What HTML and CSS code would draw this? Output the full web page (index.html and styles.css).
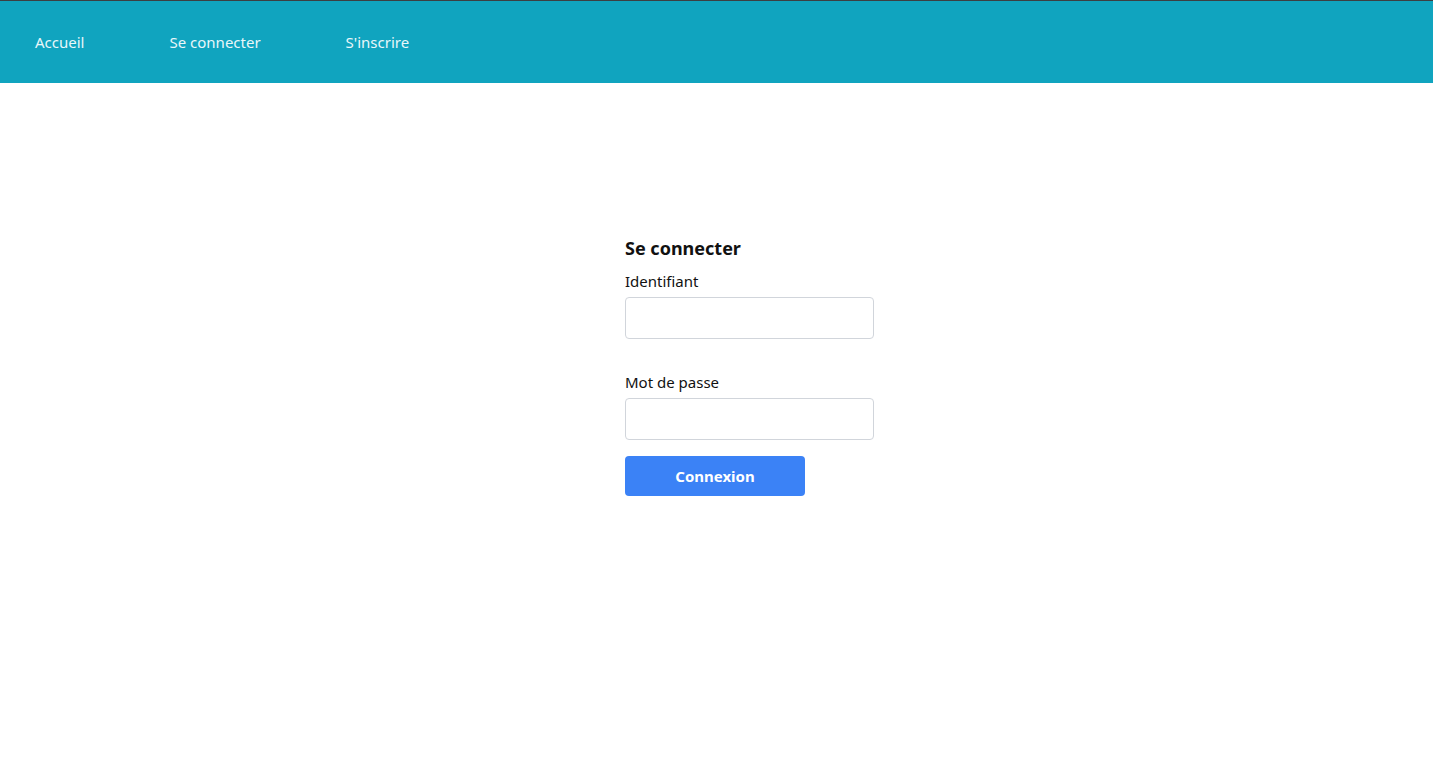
FILE: index.html
```html
<!DOCTYPE html>
<html lang="fr">
<head>
<meta charset="utf-8">
<title>Se connecter</title>
<link rel="stylesheet" href="styles.css">
</head>
<body>
<header class="topbar">
  <nav class="nav">
    <a class="nav-link" href="#">Accueil</a>
    <a class="nav-link" href="#">Se connecter</a>
    <a class="nav-link" href="#">S'inscrire</a>
  </nav>
</header>
<main class="main">
  <form class="login-form">
    <h2 class="form-title">Se connecter</h2>
    <div class="field field-login">
      <label class="field-label" for="login">Identifiant</label>
      <input class="field-input" id="login" type="text">
    </div>
    <div class="field field-password">
      <label class="field-label" for="password">Mot de passe</label>
      <input class="field-input" id="password" type="password">
    </div>
    <button class="submit-btn" type="submit">Connexion</button>
  </form>
</main>
</body>
</html>
```
FILE: styles.css
```css
* { box-sizing: border-box; }
html, body { margin: 0; padding: 0; }
body {
  font-family: "Noto Sans", "Open Sans", sans-serif;
  color: #111;
  background: #fff;
}
.topbar {
  background: #10a4bf;
  border-top: 1px solid #3c3f42;
  height: 83px;
  display: flex;
  align-items: center;
}
.nav {
  display: flex;
  gap: 85px;
  padding-left: 35px;
}
.nav-link {
  color: #e9f7fa;
  text-decoration: none;
  font-size: 15px;
}
.main {
  display: flex;
  padding-left: 625px;
  padding-top: 151px;
}
.login-form {
  width: 249px;
  display: flex;
  flex-direction: column;
}
.form-title {
  margin: 0 0 7px;
  font-size: 18px;
  font-weight: 700;
  line-height: 28px;
}
.field {
  display: flex;
  flex-direction: column;
}
.field-login { margin-bottom: 31px; }
.field-password { margin-bottom: 16px; }
.field-label {
  font-size: 15px;
  line-height: 24px;
  margin-bottom: 4px;
}
.field-input {
  height: 42px;
  border: 1px solid #d1d5db;
  border-radius: 4px;
  padding: 0 10px;
  font: inherit;
}
.submit-btn {
  width: 180px;
  height: 40px;
  border: none;
  border-radius: 4px;
  background: #3b82f6;
  color: #fff;
  font-family: inherit;
  font-size: 15px;
  font-weight: 700;
}
```
